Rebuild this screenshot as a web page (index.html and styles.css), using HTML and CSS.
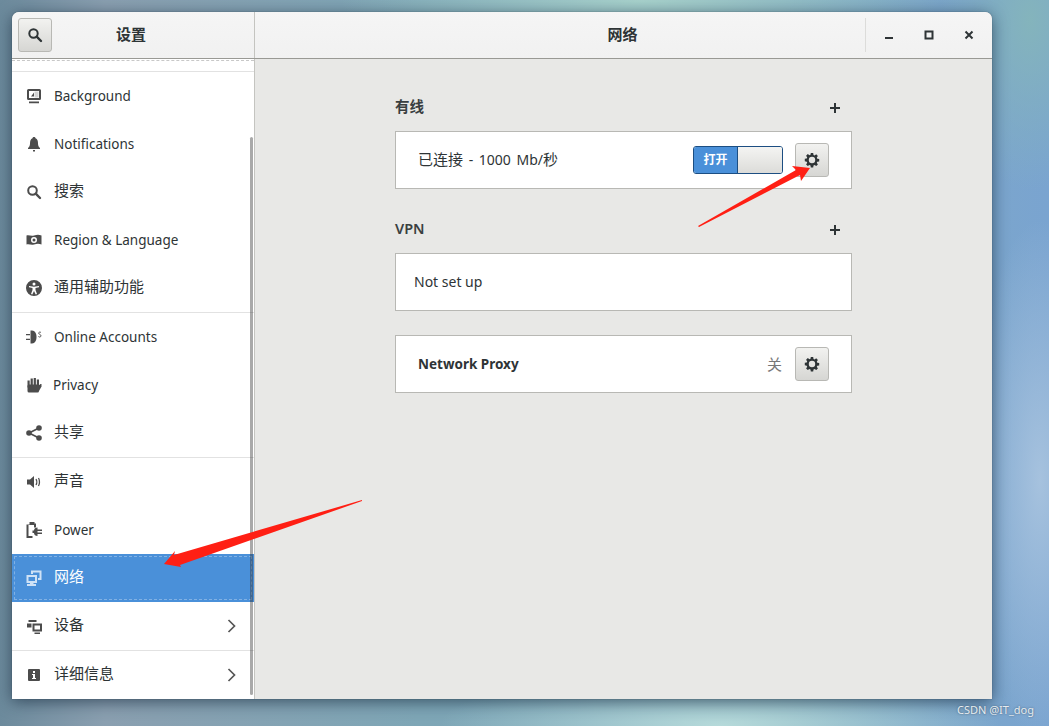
FILE: index.html
```html
<!DOCTYPE html>
<html lang="zh">
<head>
<meta charset="utf-8">
<title>设置</title>
<link rel="stylesheet" href="styles.css">
</head>
<body>
<div class="desktop">
  <div class="window">
    <header class="titlebar">
      <div class="bar-left">
        <button class="btn"><svg class="ic dark" viewBox="0 0 16 16"><circle cx="6.5" cy="6.5" r="4.2" fill="none" stroke="currentColor" stroke-width="2"/><path d="M9.7 9.7L14 14" stroke="currentColor" stroke-width="2.4" stroke-linecap="round"/></svg></button>
        <span class="bar-title left-title">设置</span>
      </div>
      <div class="bar-right">
        <span class="bar-title main-title">网络</span>
        <div class="controls">
          <span class="ctl"><svg viewBox="0 0 16 16" class="ic dark"><rect x="4" y="10" width="8" height="2"/></svg></span>
          <span class="ctl"><svg viewBox="0 0 16 16" class="ic dark"><rect x="4.5" y="4.5" width="7" height="7" fill="none" stroke="currentColor" stroke-width="2"/></svg></span>
          <span class="ctl"><svg viewBox="0 0 16 16" class="ic dark"><path d="M4.5 4.500l7 7M11.500 4.500l-7 7" stroke="currentColor" stroke-width="2"/></svg></span>
        </div>
      </div>
    </header>
    <div class="body">
      <nav class="sidebar">
        <div class="clip"></div>
        <div class="row"><svg class="ic" viewBox="0 0 16 16"><path fill-rule="evenodd" d="M2.500 1h11A1.500 1.500 0 0 1 15 2.500v8a1.500 1.500 0 0 1-1.500 1.500h-11A1.500 1.500 0 0 1 1 10.500v-8A1.500 1.500 0 0 1 2.500 1zM3 3v7h10V3z"/><path d="M3 13.500h10v1.700H3zM5 8.500l3-4v4z"/><path d="M8.500 3.500h4v6h-4z" opacity=".25"/></svg><span>Background</span></div>
        <div class="row"><svg class="ic" viewBox="0 0 16 16"><path d="M8 1c1 0 1.500.7 1.500 1.300C11.500 3 12 5 12 7.500c0 2 .8 3.500 2 4.500v1H2v-1c1.200-1 2-2.500 2-4.500C4 5 4.500 3 6.500 2.300 6.500 1.700 7 1 8 1zM7 14h2v1.500H7z"/></svg><span>Notifications</span></div>
        <div class="row"><svg class="ic" viewBox="0 0 16 16"><circle cx="6.500" cy="6.500" r="4.300" fill="none" stroke="currentColor" stroke-width="2"/><path d="M9.700 9.700L14 14" stroke="currentColor" stroke-width="2.400" stroke-linecap="round"/></svg><span class="zh">搜索</span></div>
        <div class="row"><svg class="ic" viewBox="0 0 16 16"><path fill-rule="evenodd" d="M0.500 3.500C3 2.500 5 4.500 8 3.500s5-1 7.500 0v9c-2.500-1-4.500-1-7.500 0s-5-1-7.500 0zM8 5a3 3 0 1 0 0 6a3 3 0 0 0 0-6zm0 1.500a1.500 1.500 0 1 1 0 3a1.500 1.500 0 0 1 0-3z"/></svg><span>Region &amp; Language</span></div>
        <div class="row"><svg class="ic" viewBox="0 0 16 16"><path fill-rule="evenodd" d="M8 0a8 8 0 1 1 0 16A8 8 0 0 1 8 0zm0 2.500a1.500 1.500 0 1 0 0 3a1.500 1.500 0 0 0 0-3zM3 6v1.200l3.500.8v2L5 14l1.300.4L8 11l1.700 3.400L11 14l-1.500-4V8L13 7.200V6L8 6.800z"/></svg><span class="zh">通用辅助功能</span></div>
        <div class="sep"></div>
        <div class="row"><svg class="ic" viewBox="0 0 16 16"><path d="M4.500 1.500h1.500c3 0 4.500 3 4.500 6.500s-1.500 6.500-4.500 6.500H4.500z"/><path d="M0 5h4v1.300H0zM0 9.700h4V11H0z"/><path d="M15 3.500c-1-.8-2.500-.4-2.300.8s2.500 1.200 2.300 2.600-1.800 1.400-2.600.6" fill="none" stroke="currentColor" stroke-width=".9"/></svg><span>Online Accounts</span></div>
        <div class="row"><svg class="ic" viewBox="0 0 16 16"><rect x="1.500" y="7.500" width="11.500" height="8" rx="1.500"/><rect x="1.500" y="3.500" width="2.200" height="7"/><rect x="4.600" y="1.500" width="2.200" height="8"/><rect x="7.700" y="1" width="2.200" height="8"/><rect x="10.800" y="2.500" width="2.200" height="8"/><path d="M12 9l2.500-2h1v2.500L13 14z"/></svg><span class="tight">Privacy</span></div>
        <div class="row"><svg class="ic" viewBox="0 0 16 16"><circle cx="3" cy="8" r="2.800"/><circle cx="13" cy="3" r="2.800"/><circle cx="13" cy="13" r="2.800"/><path d="M3 8l10-5M3 8l10 5" stroke="currentColor" stroke-width="1.700"/></svg><span class="zh">共享</span></div>
        <div class="sep"></div>
        <div class="row"><svg class="ic" viewBox="0 0 16 16"><path d="M1 5.500h3L8 2v12l-4-3.500H1z"/><path d="M10 5c1 1.500 1 4.500 0 6M12.500 4c1.300 2 1.300 6 0 8" fill="none" stroke="currentColor" stroke-width="1.300"/></svg><span class="zh">声音</span></div>
        <div class="row"><svg class="ic" viewBox="0 0 16 16"><path d="M3.500 0h5v1.500h1.500V5.500H8V3H2.500v11H6.500v2H.5V2.500h3z"/><path d="M6.500 8.500H8C8 6.500 9.500 5.500 11.500 5.500V7.500H16V9H11.500V10.500H16V12H11.500V14C9.500 14 8 13 8 11H6.500z"/></svg><span>Power</span></div>
        <div class="row active"><svg class="ic" viewBox="0 0 16 16"><path fill-rule="evenodd" d="M0.500 5h10.500v8H7.500v1H10v2H1v-2h3v-1H0.500zM2.500 7v4h6.500V7z"/><path d="M5 .5h10.500V10H12V8h1.500V2.500H7V4H5z"/></svg><span class="zh">网络</span></div>
        <div class="row"><svg class="ic" viewBox="0 0 16 16"><path fill-rule="evenodd" d="M6.500 5.500h9.500v8H6.500zM8.500 7.500v4h5.500v-4z"/><path d="M2.500 2h8v2h-8zM1 5.500h4.500v4H1zM8.500 14.500h5.500V16H8.500z"/></svg><span class="zh">设备</span><svg class="chev" viewBox="0 0 8 14"><path d="M1 1l6 6-6 6" fill="none" stroke="currentColor" stroke-width="1.700"/></svg></div>
        <div class="sep"></div>
        <div class="row"><svg class="ic" viewBox="0 0 16 16"><path fill-rule="evenodd" d="M3 2h10a1 1 0 0 1 1 1v10a1 1 0 0 1-1 1H3a1 1 0 0 1-1-1V3a1 1 0 0 1 1-1zM7 4v2h2V4zM6 7v1h1v3H6v1h4v-1H9V7z"/></svg><span class="zh">详细信息</span><svg class="chev" viewBox="0 0 8 14"><path d="M1 1l6 6-6 6" fill="none" stroke="currentColor" stroke-width="1.700"/></svg></div>
        <div class="scrollbar"></div>
      </nav>
      <main class="main">
        <div class="column">
          <div class="heading"><h2>有线</h2><svg class="plus" viewBox="0 0 12 12"><path d="M5 1h2v4h4v2H7v4H5V7H1V5h4z"/></svg></div>
          <section class="card wired">
            <span class="label"><span class="inline-zh">已连接</span> - 1000 Mb/<span class="inline-zh">秒</span></span>
            <span class="switch"><span class="switch-on">打开</span><span class="switch-off"></span></span>
            <button class="btn gear"><svg class="ic dark" viewBox="0 0 16 16"><path fill-rule="evenodd" d="M6.800 1h2.400l.3 1.900 1.100.5 1.600-1.100 1.700 1.700-1.100 1.600.5 1.100 1.900.3v2.400l-1.900.3-.5 1.100 1.100 1.600-1.700 1.700-1.600-1.100-1.100.5-.3 1.900H6.800l-.3-1.900-1.100-.5-1.600 1.100-1.700-1.700 1.100-1.600-.5-1.100L.8 9.200V6.800l1.900-.3.5-1.100-1.100-1.600 1.700-1.700 1.600 1.100 1.100-.5zM8 4.800a3.200 3.200 0 1 0 0 6.400a3.200 3.200 0 0 0 0-6.400z"/></svg></button>
          </section>
          <div class="heading later"><h2 class="latin">VPN</h2><svg class="plus" viewBox="0 0 12 12"><path d="M5 1h2v4h4v2H7v4H5V7H1V5h4z"/></svg></div>
          <section class="card empty"><span class="label">Not set up</span></section>
          <section class="card proxy">
            <span class="label strong">Network Proxy</span>
            <span class="state">关</span>
            <button class="btn gear"><svg class="ic dark" viewBox="0 0 16 16"><path fill-rule="evenodd" d="M6.800 1h2.400l.3 1.900 1.100.5 1.600-1.100 1.700 1.700-1.100 1.600.5 1.100 1.900.3v2.400l-1.900.3-.5 1.100 1.100 1.600-1.700 1.700-1.600-1.100-1.100.5-.3 1.900H6.800l-.3-1.900-1.100-.5-1.600 1.100-1.700-1.700 1.100-1.600-.5-1.100L.8 9.200V6.800l1.900-.3.5-1.100-1.100-1.600 1.700-1.700 1.600 1.100 1.100-.5zM8 4.800a3.200 3.200 0 1 0 0 6.400a3.200 3.200 0 0 0 0-6.400z"/></svg></button>
          </section>
        </div>
      </main>
    </div>
  </div>
  <svg class="arrows" viewBox="0 0 1049 726">
    <polygon points="698,226 796,170 792,166 810,168 801,181 800,175 699,227"/>
    <polygon points="362,500 174,555 175,551 164,564 181,567 180,565 362,501"/>
  </svg>
  <span class="watermark">CSDN @IT_dog</span>
</div>
</body>
</html>
```
FILE: styles.css
```css
* { box-sizing: border-box; }
html, body { margin: 0; height: 100%; }
body {
  overflow: hidden;
  font-family: "Noto Sans", "Noto Sans CJK SC", sans-serif;
  font-size: 14px;
  color: #2e3436;
}
.desktop {
  position: relative;
  width: 1049px;
  height: 726px;
  padding: 12px 57px 27px 12px;
  background:
    radial-gradient(ellipse 300px 60px at 640px 0px, #a8d2cc 0%, rgba(168,210,204,0) 100%),
    radial-gradient(ellipse 280px 60px at 720px 726px, #b6dada 0%, rgba(182,218,218,0) 100%),
    radial-gradient(ellipse 70px 260px at 1040px 480px, #a6c2de 0%, rgba(166,194,222,0) 100%),
    radial-gradient(ellipse 90px 170px at 1030px 20px, #84b4bc 0%, rgba(132,180,188,0) 100%),
    linear-gradient(90deg, #6c8a9c 0%, #8a9fb0 10%, #7ea6b6 40%, #7eaac0 75%, #7aa4d0 100%);
}
.window {
  display: flex;
  flex-direction: column;
  width: 980px;
  height: 687px;
  border-radius: 7px 7px 0 0;
  overflow: hidden;
  background: #e8e8e6;
  box-shadow: 0 3px 16px rgba(20, 40, 60, .65), 0 0 1px rgba(20, 40, 60, .8);
}
.titlebar {
  display: flex;
  flex: 0 0 47px;
  background: linear-gradient(#f5f5f5, #f1f1f1);
  border-bottom: 1px solid #999994;
}
.bar-left {
  display: flex;
  align-items: center;
  width: 243px;
  padding-left: 6px;
  border-right: 1px solid #c4c4c0;
}
.bar-title { font-weight: 700; font-size: 15px; color: #2e3436; padding-bottom: 4px; }
.left-title { margin-left: 64px; }
.bar-right {
  position: relative;
  flex: 1;
  display: flex;
  align-items: center;
  justify-content: center;
}
.main-title { margin-left: -2px; }
.controls {
  position: absolute;
  right: 0;
  top: 6px;
  height: 34px;
  display: flex;
  align-items: center;
  width: 127px;
  padding-left: 3px;
  border-left: 1px solid #dcdcda;
}
.ctl { display: flex; width: 40px; justify-content: center; }
.btn {
  display: flex;
  align-items: center;
  justify-content: center;
  width: 34px;
  height: 34px;
  padding: 0;
  border: 1px solid #b8b8b4;
  border-radius: 3px;
  background: linear-gradient(#f2f2f0, #d6d6d3);
}
.ic { width: 16px; height: 16px; flex: none; fill: currentColor; color: #4c4c4c; }
.ic.dark { color: #2e3436; }
.body { flex: 1; display: flex; min-height: 0; }
.sidebar {
  position: relative;
  width: 243px;
  background: #fff;
  border-right: 1px solid #c4c4c0;
}
.clip {
  height: 12px;
  margin-top: 1px;
  border-top: 1px dashed #c8c8c8;
  border-bottom: 1px solid #e2e2e2;
}
.row {
  display: flex;
  align-items: center;
  gap: 12px;
  height: 48px;
  padding: 0 14px;
  font-size: 13.500px;
  color: #2e3436;
}
.row span.zh { font-size: 15px; padding-bottom: 6px; }
.row .chev { width: 9px; height: 14px; margin-left: auto; margin-right: 4px; color: #555; }
.row .tight { margin-left: -1px; }
.row.active {
  background: #4a90d9;
  color: #fff;
  outline: 1px dashed rgba(255, 255, 255, .3);
  outline-offset: -3px;
}
.row.active .ic { color: #cfe2f6; }
.sep { height: 1px; background: #e2e2e2; }
.scrollbar {
  position: absolute;
  right: 1px;
  top: 78px;
  bottom: 4px;
  width: 3px;
  border-radius: 2px;
  background: rgba(50, 50, 50, .42);
}
.main { flex: 1; display: flex; padding-left: 140px; }
.column { width: 457px; }
.heading {
  display: flex;
  align-items: center;
  justify-content: space-between;
  height: 24px;
  margin: 36px 0 12px;
  padding-right: 11px;
}
.heading.later { margin-top: 28px; }
.heading h2 { margin: 0; padding-bottom: 4px; font-size: 14.500px; font-weight: 600; color: #3a3f41; }
.heading h2.latin { padding-bottom: 2px; }
.plus { width: 12px; height: 12px; margin-top: 2px; fill: #2e3436; }
.card {
  display: flex;
  align-items: center;
  height: 58px;
  padding-right: 22px;
  background: #fff;
  border: 1px solid #b8b8b4;
}
.card .label { margin-left: 22px; padding-bottom: 4px; word-spacing: 2px; }
.inline-zh { font-size: 15px; }
.card.empty .label { margin-left: 18px; padding-bottom: 2px; word-spacing: 0; }
.card .strong { font-weight: 700; font-size: 13.500px; padding-bottom: 0; word-spacing: 0; }
.proxy { margin-top: 24px; }
.state { margin-left: auto; margin-right: 13px; padding-bottom: 2px; color: #777; font-size: 15px; }
.switch {
  display: flex;
  width: 90px;
  height: 28px;
  margin-left: auto;
  margin-right: 12px;
  border: 1px solid #1c4e82;
  border-radius: 3px;
  overflow: hidden;
}
.switch-on {
  width: 43px;
  display: flex;
  align-items: center;
  justify-content: center;
  padding-bottom: 2px;
  background: #4a90d9;
  color: #fff;
  font-size: 12px;
  font-weight: 700;
}
.switch-off {
  flex: 1;
  background: linear-gradient(#f4f4f2, #dcdcd9);
  border-left: 1px solid #1c4e82;
}
.arrows { position: absolute; inset: 0; width: 1049px; height: 726px; pointer-events: none; }
.arrows polygon { fill: #ff1f14; }
.watermark {
  position: absolute;
  right: 15px;
  top: 702px;
  font-family: "Noto Sans", sans-serif;
  font-size: 11px;
  color: #e6ecf0;
  text-shadow: 0 0 2px rgba(40, 60, 80, .7);
}
```
